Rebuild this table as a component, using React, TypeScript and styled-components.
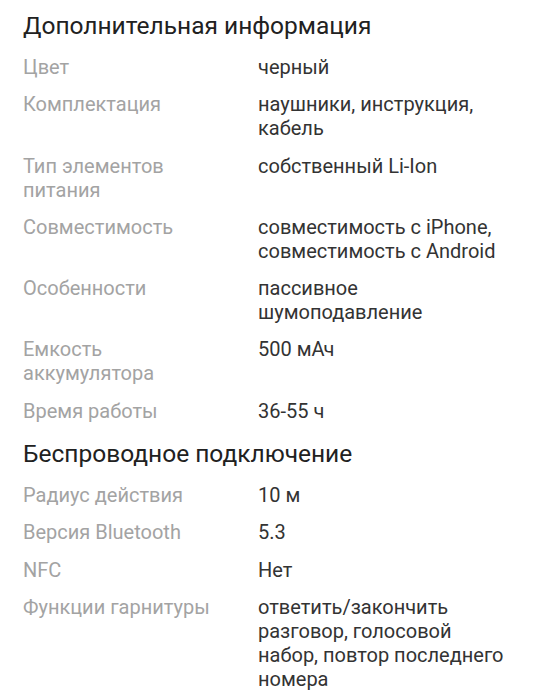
import React from "react";
import styled, { createGlobalStyle } from "styled-components";

const GlobalStyle = createGlobalStyle`
  body {
    margin: 0;
    background: #ffffff;
    font-family: Roboto, "Noto Sans", sans-serif;
  }
`;

const Root = styled.div`
  display: flex;
  flex-direction: column;
  padding: 10px 29px 0 23px;
  width: 539px;
  box-sizing: border-box;
`;

const Section = styled.section`
  display: flex;
  flex-direction: column;
  margin-bottom: 2px;
`;

const Heading = styled.h2`
  margin: 0 0 13px 0;
  font-size: 24.5px;
  font-weight: 400;
  line-height: 32px;
  color: #212121;
`;

const Row = styled.div`
  display: grid;
  grid-template-columns: 235px 1fr;
  padding: 0 0 13.3px 0;
  font-size: 20px;
  line-height: 24px;
`;

const Label = styled.div`
  color: #a3a3a3;
  padding-right: 32px;
`;

const Value = styled.div`
  color: #333333;
`;

type Spec = { label: string; value: string };

const additional: Spec[] = [
  { label: "Цвет", value: "черный" },
  { label: "Комплектация", value: "наушники, инструкция, кабель" },
  { label: "Тип элементов питания", value: "собственный Li-Ion" },
  { label: "Совместимость", value: "совместимость с iPhone, совместимость с Android" },
  { label: "Особенности", value: "пассивное шумоподавление" },
  { label: "Емкость аккумулятора", value: "500 мАч" },
  { label: "Время работы", value: "36-55 ч" },
];

const wireless: Spec[] = [
  { label: "Радиус действия", value: "10 м" },
  { label: "Версия Bluetooth", value: "5.3" },
  { label: "NFC", value: "Нет" },
  {
    label: "Функции гарнитуры",
    value: "ответить/закончить разговор, голосовой набор, повтор последнего номера",
  },
];

const SpecSection = ({ title, items }: { title: string; items: Spec[] }) => (
  <Section>
    <Heading>{title}</Heading>
    {items.map((item) => (
      <Row key={item.label}>
        <Label>{item.label}</Label>
        <Value>{item.value}</Value>
      </Row>
    ))}
  </Section>
);

const App = () => {
  return (
    <>
      <GlobalStyle />
      <Root>
        <SpecSection title="Дополнительная информация" items={additional} />
        <SpecSection title="Беспроводное подключение" items={wireless} />
      </Root>
    </>
  );
};

export default App;
